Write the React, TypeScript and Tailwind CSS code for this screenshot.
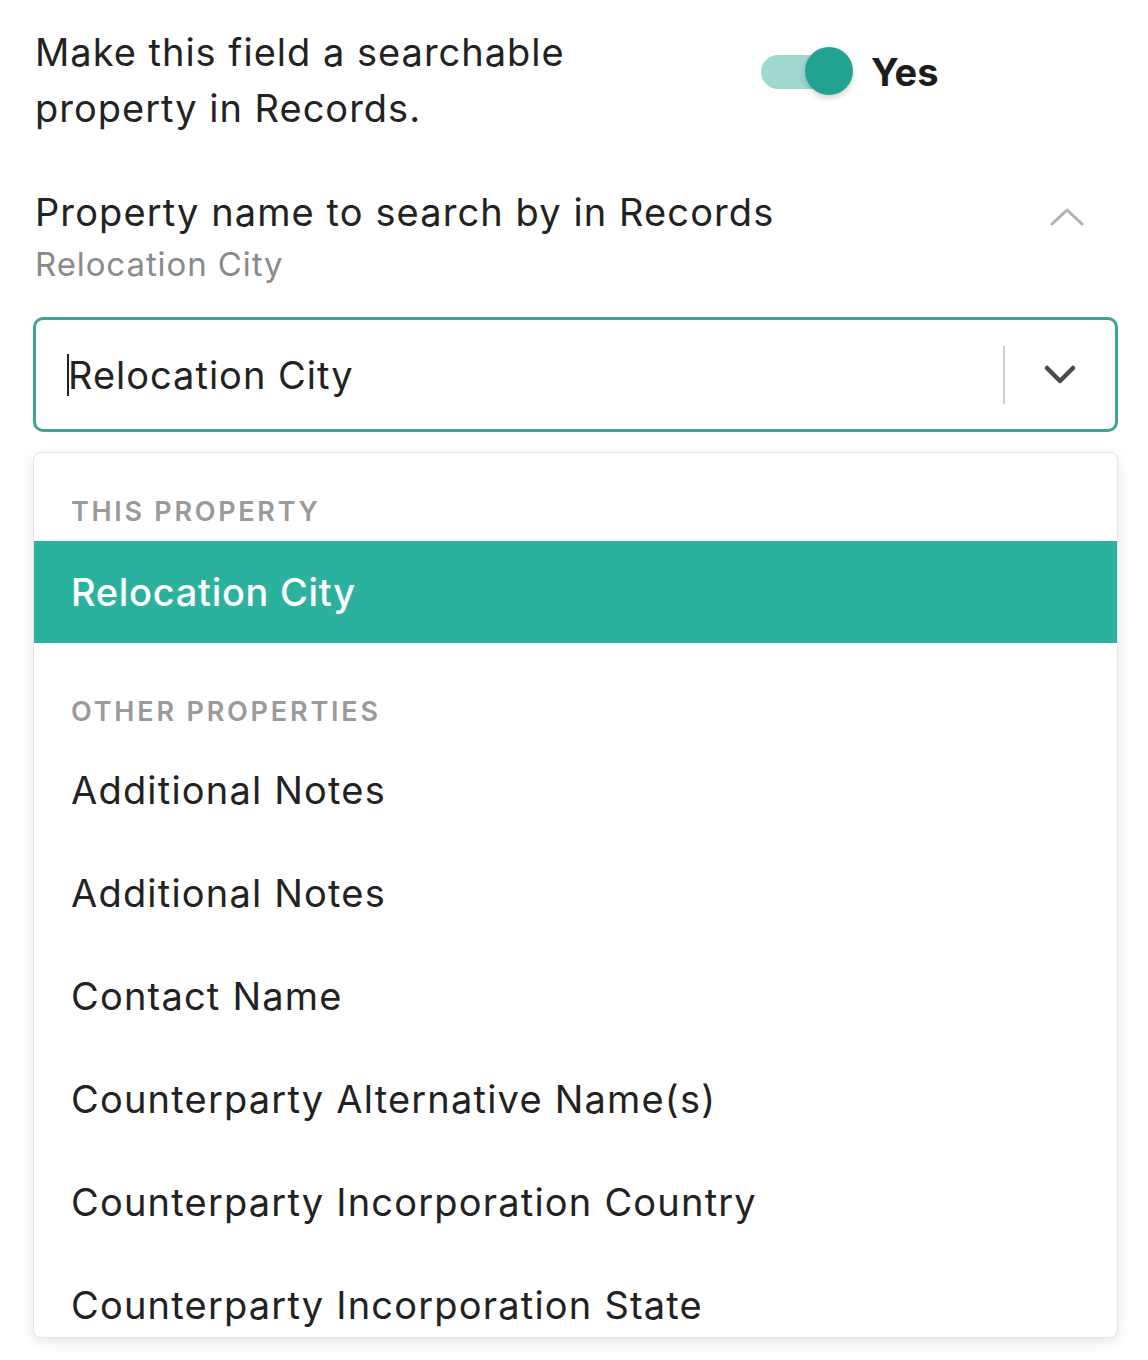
import { useState } from 'react';

const otherProperties = [
  'Additional Notes',
  'Additional Notes',
  'Contact Name',
  'Counterparty Alternative Name(s)',
  'Counterparty Incorporation Country',
  'Counterparty Incorporation State',
];

function Toggle({ on }: { on: boolean }) {
  return (
    <div className="relative w-[92px] h-[52px] flex items-center">
      <div className="w-[86px] h-[34px] rounded-full bg-[#9fd9cf]" />
      {on && (
        <div className="absolute right-0 top-[1px] w-[48px] h-[48px] rounded-full bg-[#22a392] shadow-[0_3px_6px_rgba(0,0,0,0.18)]" />
      )}
    </div>
  );
}

export default function App() {
  const [searchable] = useState(true);

  return (
    <div className="w-[1148px] h-[1360px] overflow-hidden bg-white font-['Inter',sans-serif] text-[#222] pl-[33px] pr-[30px]">
      {/* Searchable toggle */}
      <div className="flex items-start pt-[24px]">
        <p className="w-[728px] pl-[2px] text-[38px] leading-[56px] tracking-[1px]">
          Make this field a searchable
          <br />
          property in Records.
        </p>
        <div className="flex items-center gap-[18px] mt-[20px]">
          <Toggle on={searchable} />
          <span className="text-[38px] font-bold leading-[56px] text-[#1c1c1c]">Yes</span>
        </div>
      </div>

      {/* Property name */}
      <div className="flex items-start justify-between mt-[48px] pl-[2px]">
        <div>
          <p className="text-[38px] leading-[56px] tracking-[1.1px]">Property name to search by in Records</p>
          <p className="text-[33px] leading-[48px] tracking-[0.9px] text-[#8a8a8a]">Relocation City</p>
        </div>
        <svg width="36" height="24" viewBox="0 0 36 24" className="mt-[20px] mr-[33px]" fill="none">
          <path d="M3 20 L18 6 L33 20" stroke="#b0b0b0" strokeWidth="3" strokeLinecap="round" strokeLinejoin="round" />
        </svg>
      </div>

      {/* Select input */}
      <div className="mt-[29px] h-[115px] rounded-[10px] border-[3px] border-[#3fa593] flex items-center">
        <div className="flex-1 flex items-center pl-[31px]">
          <span className="w-[2px] h-[42px] bg-[#222]" />
          <span className="text-[38px] leading-[56px] tracking-[1px] -ml-[1px]">Relocation City</span>
        </div>
        <span className="w-[2px] h-[58px] bg-[#cfcfcf]" />
        <div className="w-[110px] flex justify-center">
          <svg width="34" height="22" viewBox="0 0 34 22" fill="none">
            <path d="M4 4 L17 17 L30 4" stroke="#4a4a4a" strokeWidth="4.5" strokeLinecap="round" strokeLinejoin="round" />
          </svg>
        </div>
      </div>

      {/* Menu */}
      <div className="mt-[20px] h-[886px] overflow-hidden rounded-[8px] border border-[#e4e4e4] bg-white shadow-[0_4px_14px_rgba(0,0,0,0.1)]">
        <div className="pt-[40px] pb-[10px] px-[37px] text-[27px] leading-[38px] font-semibold tracking-[2.7px] text-[#9a9a9a]">
          THIS PROPERTY
        </div>
        <div className="h-[102px] bg-[#2bb29f] flex items-center px-[37px] text-[38px] font-medium tracking-[0.7px] text-white">
          Relocation City
        </div>
        <div className="pt-[50px] pb-[8px] px-[37px] text-[27px] leading-[38px] font-semibold tracking-[2.8px] text-[#9a9a9a]">
          OTHER PROPERTIES
        </div>
        {otherProperties.map((name, i) => (
          <div key={i} className="h-[103px] flex items-center px-[37px] text-[38px] tracking-[1.2px]">
            {name}
          </div>
        ))}
      </div>
    </div>
  );
}
